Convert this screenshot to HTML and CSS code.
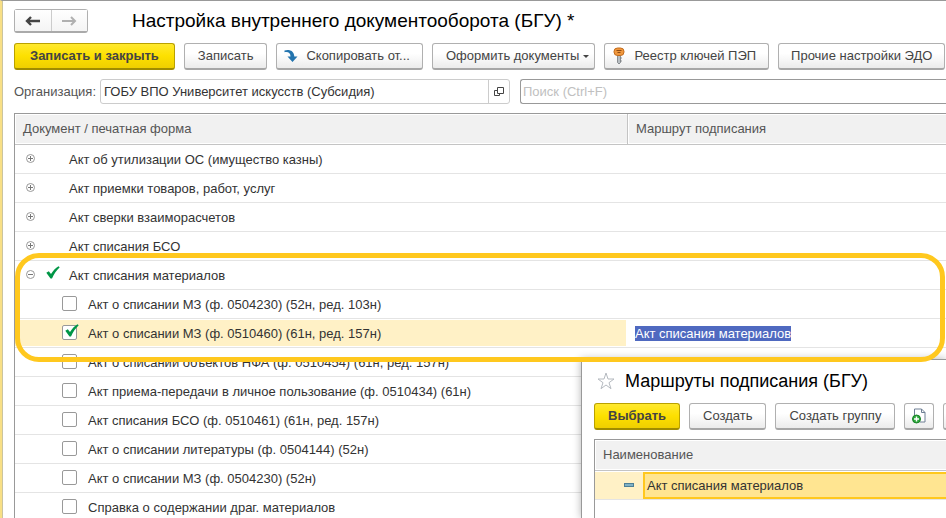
FILE: index.html
```html
<!DOCTYPE html>
<html lang="ru">
<head>
  <meta charset="UTF-8" />
  <title>Настройка внутреннего документооборота (БГУ)</title>
  <link rel="stylesheet" href="styles.css">
</head>
<body>
  <main class="form">
    <header class="form-header">
      <div class="nav">
        <button type="button" aria-label="Назад">
          <svg width="16" height="12" viewBox="0 0 16 12"><path d="M6 2 2 6l4 4M2 6h13" fill="none" stroke="#444" stroke-width="2.4"/></svg>
        </button>
        <button type="button" aria-label="Вперед">
          <svg width="16" height="12" viewBox="0 0 16 12"><path d="M10 2 14 6l-4 4M14 6H1" fill="none" stroke="#b0b0b0" stroke-width="2"/></svg>
        </button>
      </div>
      <h1>Настройка внутреннего документооборота (БГУ) *</h1>
    </header>

    <div class="toolbar">
      <button type="button" class="btn btn-main btn-save">Записать и закрыть</button>
      <button type="button" class="btn">Записать</button>
      <button type="button" class="btn btn-icon">
        <svg width="14" height="14" viewBox="0 0 14 14"><path d="M0.500 1.500C5 0 10 1.500 10.300 7.500H13.500L8.500 13 3.500 7.500H6.500C6.500 4.500 4.500 2.500 0.500 3.300z" fill="#2374ae"/></svg>
        Скопировать от...
      </button>
      <button type="button" class="btn btn-menu">Оформить документы <span class="caret"></span></button>
      <button type="button" class="btn btn-icon">
        <svg width="14" height="18" viewBox="0 0 14 18">
          <path d="M5.500 8h3v7.500L7 17l-1.500-1.500z" fill="#b8bec2" stroke="#75797c" stroke-width=".8"/>
          <path d="M8.500 11h1.300M8.500 14h1.300" stroke="#75797c"/>
          <rect x="2" y="1" width="10" height="7.500" rx="3.500" fill="#f0983e" stroke="#c26a1b"/>
          <path d="M4.500 3.500h5M5.500 5.500h3" stroke="#8f4b12"/>
        </svg>
        Реестр ключей ПЭП
      </button>
      <button type="button" class="btn btn-last">Прочие настройки ЭДО</button>
    </div>

    <div class="filters">
      <label for="org">Организация:</label>
      <div class="org-field">
        <input type="text" id="org" value="ГОБУ ВПО Университет искусств (Субсидия)" />
        <button type="button" aria-label="Открыть">
          <svg width="10" height="10" viewBox="0 0 10 10"><path d="M3.500.5h6v6h-6zM3.500 3.500h-3v5h5v-2" fill="none" stroke="#444"/></svg>
        </button>
      </div>
      <input type="text" class="search" placeholder="Поиск (Ctrl+F)" aria-label="Поиск" />
    </div>

    <div class="list-area">
      <table class="grid">
        <colgroup><col class="col-doc"><col></colgroup>
        <thead>
          <tr><th>Документ / печатная форма</th><th>Маршрут подписания</th></tr>
        </thead>
        <tbody>
          <tr><td><div class="group"><button type="button" class="toggle plus" aria-label="Развернуть"></button><span class="mark"></span>Акт об утилизации ОС (имущество казны)</div></td><td></td></tr>
          <tr><td><div class="group"><button type="button" class="toggle plus" aria-label="Развернуть"></button><span class="mark"></span>Акт приемки товаров, работ, услуг</div></td><td></td></tr>
          <tr><td><div class="group"><button type="button" class="toggle plus" aria-label="Развернуть"></button><span class="mark"></span>Акт сверки взаиморасчетов</div></td><td></td></tr>
          <tr><td><div class="group"><button type="button" class="toggle plus" aria-label="Развернуть"></button><span class="mark"></span>Акт списания БСО</div></td><td></td></tr>
          <tr><td><div class="group"><button type="button" class="toggle" aria-label="Свернуть"></button><span class="mark"><svg width="14" height="13" viewBox="0 0 14 13"><path d="M0.300 6.800 2.800 5.200 5 8C7 5 9.500 2 12.500 0.300L13.700 1.300C10.500 4.500 8 8 6 12.500H4.500z" fill="#009646"/></svg></span>Акт списания материалов</div></td><td></td></tr>
          <tr><td><label class="item"><input type="checkbox" />Акт о списании МЗ (ф. 0504230) (52н, ред. 103н)</label></td><td></td></tr>
          <tr class="current"><td><label class="item"><input type="checkbox" checked />Акт о списании МЗ (ф. 0510460) (61н, ред. 157н)</label></td><td><span class="selected">Акт списания материалов</span></td></tr>
          <tr><td><label class="item"><input type="checkbox" />Акт о списании объектов НФА (ф. 0510454) (61н, ред. 157н)</label></td><td></td></tr>
          <tr><td><label class="item"><input type="checkbox" />Акт приема-передачи в личное пользование (ф. 0510434) (61н)</label></td><td></td></tr>
          <tr><td><label class="item"><input type="checkbox" />Акт списания БСО (ф. 0510461) (61н, ред. 157н)</label></td><td></td></tr>
          <tr><td><label class="item"><input type="checkbox" />Акт о списании литературы (ф. 0504144) (52н)</label></td><td></td></tr>
          <tr><td><label class="item"><input type="checkbox" />Акт о списании МЗ (ф. 0504230) (52н)</label></td><td></td></tr>
          <tr><td><label class="item"><input type="checkbox" />Справка о содержании драг. материалов</label></td><td></td></tr>
        </tbody>
      </table>
    </div>
  </main>

  <section class="popup">
    <header class="popup-header">
      <svg width="18" height="18" viewBox="0 0 18 18"><path d="M9 1l2 6h6l-5 3.700 2 6L9 13l-5 3.700 2-6L1 7h6z" fill="none" stroke="#b5bac0"/></svg>
      <h2>Маршруты подписания (БГУ)</h2>
    </header>
    <div class="toolbar">
      <button type="button" class="btn btn-main">Выбрать</button>
      <button type="button" class="btn">Создать</button>
      <button type="button" class="btn">Создать группу</button>
      <button type="button" class="btn btn-square" aria-label="Создать копированием">
        <svg width="14" height="16" viewBox="0 0 14 16">
          <path d="M2.500 7V1h7l3.500 3.500V14H8M9.500 1v3.500H13" fill="#fff" stroke="#6e7f94"/>
          <circle cx="4.500" cy="11" r="4" fill="#2fa83c" stroke="#158024"/>
          <path d="M4.500 8.500v5M2 11h5" stroke="#fff" stroke-width="1.400"/>
        </svg>
      </button>
      <button type="button" class="btn btn-square" aria-label="Найти"></button>
    </div>
    <table class="grid routes">
      <colgroup><col class="col-mark"><col></colgroup>
      <thead>
        <tr><th colspan="2">Наименование</th></tr>
      </thead>
      <tbody>
        <tr><td class="dash-cell"><span class="dash"></span></td><td class="active">Акт списания материалов</td></tr>
        <tr class="empty"><td></td><td></td></tr>
      </tbody>
    </table>
  </section>

  <div class="highlight"></div>
</body>
</html>
```
FILE: styles.css
```css
* { box-sizing: border-box; }
body {
  position: relative;
  margin: 0;
  height: 100vh;
  overflow: hidden;
  background: #fff;
  color: #333;
  font: 13px/16px "Liberation Sans", Arial, sans-serif;
}
button, input { font: inherit; color: inherit; margin: 0; }
svg { display: block; flex: none; }
h1, h2 { margin: 0; color: #000; font-weight: normal; white-space: nowrap; line-height: 24px; }
h1 { font-size: 19px; }
h2 { font-size: 18px; }

.form {
  height: 100%;
  padding: 8px 0 0 12px;
  overflow: hidden;
  border-top: 1px solid #999;
  border-left: 2px solid #f8df85;
  box-shadow: inset 1px 0 #cbc49f;
}
.form-header { display: flex; align-items: center; gap: 44px; height: 24px; }
.nav {
  display: flex;
  width: 74px;
  height: 24px;
  border: 1px solid #b0b0b0;
  border-bottom: 2px solid #aaa;
  border-radius: 3px;
}
.nav button {
  flex: 1;
  display: flex;
  align-items: center;
  justify-content: center;
  padding: 0;
  border: none;
  background: linear-gradient(#fff, #f4f4f4);
}
.nav button + button { border-left: 1px solid #ccc; }

.toolbar { display: flex; gap: 9px; margin-top: 10px; }
.btn {
  display: flex;
  align-items: center;
  justify-content: center;
  flex: none;
  height: 27px;
  padding: 0 13px;
  border: 1px solid #b0b0b0;
  border-bottom: 2px solid #a6a6a6;
  border-radius: 3px;
  background: linear-gradient(#fff 40%, #ebebeb);
  color: #444;
  white-space: nowrap;
}
.btn-main {
  border-color: #b9a100 #b9a100 #a08c00;
  background: linear-gradient(#ffe92e, #fde000 50%, #efcf00);
  font-weight: bold;
}
.btn-save { padding: 0 15px; }
.btn-icon { gap: 8px; padding: 0 12px 0 7px; }
.btn-menu { padding-right: 5px; }
.btn-last { padding: 0 12px; }
.btn-square { width: 30px; padding: 0; }
.caret { margin-left: 4px; border: 3px solid transparent; border-top-color: #444; border-bottom: none; }

.filters { display: flex; align-items: center; height: 25px; margin-top: 9px; }
.filters label { width: 86px; color: #555; }
.org-field {
  display: flex;
  width: 410px;
  height: 25px;
  margin-right: 10px;
  border: 1px solid #ccc;
  border-radius: 3px;
}
.org-field input { flex: 1; min-width: 0; padding: 0 3px; border: none; background: none; }
.org-field button {
  display: flex;
  align-items: center;
  justify-content: center;
  width: 21px;
  padding: 0;
  border: none;
  border-left: 1px solid #ccc;
  background: none;
}
.search {
  flex: 1;
  height: 25px;
  padding: 0 2px;
  border: 1px solid #999;
  border-right: none;
  border-radius: 3px 0 0 3px;
}
.search::placeholder { color: #c0c0c0; }

.list-area { margin-top: 9px; }
.grid {
  width: 100%;
  table-layout: fixed;
  border-collapse: separate;
  border-spacing: 0;
  border-top: 1px solid #999;
  border-left: 1px solid #999;
}
.grid th {
  height: 31px;
  padding: 0 8px;
  border-bottom: 1px solid #c4c4c4;
  background: #f1f1f1;
  box-shadow: inset 1px 1px #fff, inset 0 -1px #fff;
  color: #555;
  font-weight: normal;
  text-align: left;
}
.grid th + th { border-left: 1px solid #c4c4c4; }
.grid td {
  height: 29px;
  padding: 2px 8px 0;
  border-bottom: 1px solid #e4e4e4;
  white-space: nowrap;
}
.col-doc { width: 612px; }
.col-mark { width: 48px; }
.grid .current td:first-child { background: #fff1c6; box-shadow: inset 0 1px #fff, inset 0 -1px #fff, inset -1px 0 #fff; }

.group, .item { display: flex; align-items: center; height: 16px; }
.toggle {
  flex: none;
  width: 9px;
  height: 9px;
  margin: 0 0 3px 3px;
  padding: 0;
  border: 1px solid #999;
  border-radius: 50%;
  background: linear-gradient(#777, #777) center / 5px 1px no-repeat;
}
.toggle.plus {
  background:
    linear-gradient(#777, #777) center / 5px 1px no-repeat,
    linear-gradient(#777, #777) center / 1px 5px no-repeat;
}
.mark { width: 34px; padding: 0 0 7px 11px; }

.item { padding-left: 39px; gap: 11px; }
.item input {
  appearance: none;
  position: relative;
  flex: none;
  width: 15px;
  height: 15px;
  margin-bottom: 3px;
  border: 1px solid #999;
  border-radius: 2px;
  background: #fff;
}
/* the tick sticks out past the top right corner of the box */
.item input:checked::before {
  content: "";
  position: absolute;
  top: -2px;
  left: 2px;
  width: 14px;
  height: 13px;
  background: url("data:image/svg+xml,%3Csvg xmlns='http://www.w3.org/2000/svg' viewBox='0 0 14 13'%3E%3Cpath d='M.3 6.800 2.800 5.200 5 8C7 5 9.500 2 12.500.3L13.700 1.300C10.500 4.500 8 8 6 12.500H4.500z' fill='%23009646'/%3E%3C/svg%3E") no-repeat;
}
.selected { background: #4f69c0; color: #fff; }

.popup {
  position: absolute;
  top: 359px;
  left: 581px;
  right: 0;
  bottom: 0;
  padding: 9px 0 0 12px;
  overflow: hidden;
  border-top: 1px solid #999;
  border-left: 1px solid #999;
  background: #fff;
  box-shadow: 0 0 8px rgba(0, 0, 0, 0.3);
}
.popup-header { display: flex; align-items: center; gap: 10px; padding-left: 3px; }
.popup .grid { margin-top: 9px; }
.routes .dash-cell { padding: 0 0 0 29px; background: #fff1c6; box-shadow: inset 0 1px #fff; }
.routes .empty td { border-bottom: none; }
.dash { display: block; width: 10px; height: 4px; border: 1px solid #4d7f96; background: #7fb1c6; }
.routes .active {
  padding: 2px 4px 0;
  background: #ffe591;
  box-shadow: inset 0 1px #fff, inset 2px 0 #ffc81e, inset 0 3px #ffc81e, inset 0 -2px #ffc81e;
}

/* marker frame around the expanded group */
.highlight {
  position: absolute;
  top: 253px;
  left: 15px;
  right: 1px;
  height: 109px;
  border: 5px solid #ffc81e;
  border-radius: 24px;
  pointer-events: none;
}
```
